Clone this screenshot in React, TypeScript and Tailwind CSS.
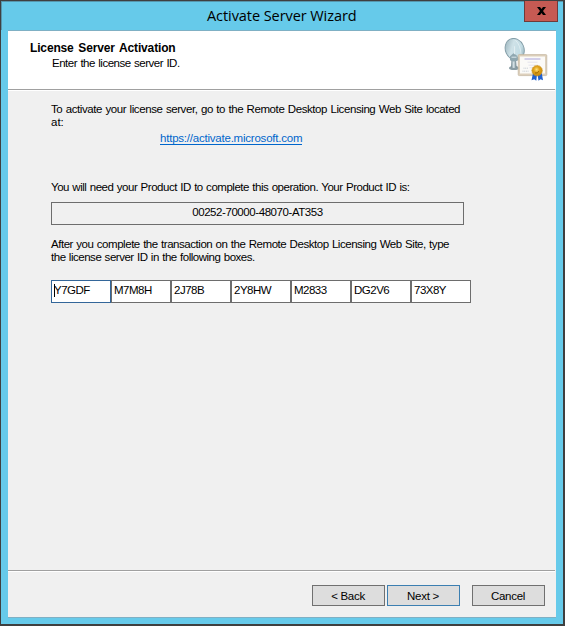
const keys = ["Y7GDF", "M7M8H", "2J78B", "2Y8HW", "M2833", "DG2V6", "73X8Y"];

function LicenseIcon() {
  return (
    <svg width="46" height="46" viewBox="0.5 0.8 46 46" className="block">
      <defs>
        <linearGradient id="dish" x1="0" y1="0" x2="1" y2="1">
          <stop offset="0" stopColor="#8fa9b2" />
          <stop offset="0.4" stopColor="#cfe2e8" />
          <stop offset="0.7" stopColor="#c3dce4" />
          <stop offset="1" stopColor="#86a1ab" />
        </linearGradient>
        <linearGradient id="stand" x1="0" y1="0" x2="1" y2="0">
          <stop offset="0" stopColor="#6d838c" />
          <stop offset="0.5" stopColor="#dce8ec" />
          <stop offset="1" stopColor="#5f767f" />
        </linearGradient>
        <radialGradient id="seal" cx="0.45" cy="0.4" r="0.6">
          <stop offset="0" stopColor="#ffe27a" />
          <stop offset="0.45" stopColor="#e0a21c" />
          <stop offset="1" stopColor="#c98a0c" />
        </radialGradient>
      </defs>
      <ellipse cx="10.5" cy="30.7" rx="5" ry="2" fill="#8a9da5" />
      <path d="M8 22 L12.5 22 L13 30 Q11 31.5 7.5 30Z" fill="url(#stand)" />
      <ellipse cx="11.2" cy="12" rx="9.3" ry="11" transform="rotate(-24 11.2 12)" fill="url(#dish)" stroke="#839da7" strokeWidth="0.9" />
      <path d="M6.5 19 L10 16 L13 18 L16 22 Q11 26 6.5 23Z" fill="#8fa7b0" />
      <path d="M8 20H13" stroke="#d9e6ea" strokeWidth="1" />
      <path d="M12 3 Q17 8 17.5 17" fill="none" stroke="#edf5f7" strokeWidth="1" opacity="0.6" />
      <path d="M11 9V17" stroke="#edf5f7" strokeWidth="1" opacity="0.7" />
      <rect x="14.7" y="17.4" width="28.6" height="21" rx="1" fill="#ddd0bc" stroke="#c3b49e" strokeWidth="0.7" />
      <rect x="16.5" y="19.3" width="25" height="17" fill="#fbfaf7" />
      <path d="M21 21.8H37" stroke="#aaa4dc" strokeWidth="1" />
      <path d="M24 25H34M25 28H33M26 30.5H32" stroke="#dadaea" strokeWidth="0.7" />
      <path d="M20 31H25M19 34H25" stroke="#c4cbd2" strokeWidth="1" strokeDasharray="1 0.7" />
      <path d="M29.5 36 L33.5 37 L32.8 43.5 L30.7 42 L28 43Z" fill="#2160ce" />
      <path d="M34 37 L38.3 36 L39.5 43 L37 42 L35 43.5Z" fill="#2160ce" />
      <circle cx="33.6" cy="33.4" r="5.2" fill="url(#seal)" stroke="#c98e16" strokeWidth="0.8" strokeDasharray="1.2 0.5" />
      <path d="M31.5 35.8 Q34 36.5 35.5 34" fill="none" stroke="#9d6500" strokeWidth="1" />
    </svg>
  );
}

function Rule() {
  return <div className="mr-px h-[2px] shrink-0 border-t border-[#a0a0a0] bg-white" />;
}

export default function App() {
  return (
    <div className="flex h-[626px] w-[565px] flex-col overflow-hidden border-t border-r-2 border-b-2 border-l border-[#3f3f3f] bg-[#66caea] font-['Liberation_Sans',Arial,sans-serif] text-[11.5px] leading-[13px] text-black">
      <div className="flex h-[29px] shrink-0 border-t border-l border-[#5696ad]">
        <div className="w-[41px]" />
        <div className="flex-1 pt-[4px] pl-[164px] font-['Open_Sans','Noto_Sans',sans-serif] text-[14.5px] leading-[20px] whitespace-nowrap">
          <span className="tracking-[-0.07px]">Activate Server Wizard</span>
        </div>
        <button className="mr-[5px] -mt-px flex h-[21px] w-[34px] items-center justify-center border border-t-0 border-[#6f3a3a] bg-[#c65a53]">
          <svg width="9" height="8" viewBox="0 0 9 8">
            <path d="M0 0H3L4.5 2L6 0H9L6 4L9 8H6L4.5 6L3 8H0L3 4Z" fill="#000" />
          </svg>
        </button>
      </div>
      <div className="mr-[7px] mb-[6px] ml-[7px] flex flex-1 flex-col border-t border-b border-[#7fb0c4] bg-[#f0f0f0]">
        <header className="flex h-[58px] shrink-0 justify-between bg-white pr-[6px]">
          <div className="pt-[11px] pl-[22px] whitespace-nowrap">
            <h1 className="text-[12px] leading-[13px] font-bold [word-spacing:1.5px]"><span className="tracking-[-0.15px]">License Server Activation</span></h1>
            <p className="mt-[2px] pl-[22px] [word-spacing:0.6px]"><span className="tracking-[-0.48px]">Enter the license server ID.</span></p>
          </div>
          <div className="pt-[7px]"><LicenseIcon /></div>
        </header>
        <Rule />
        <main className="flex flex-1 flex-col pt-[12px] pl-[43px] whitespace-nowrap [word-spacing:0.6px]">
          <p>
            <span className="tracking-[-0.41px]">To activate your license server, go to the Remote Desktop Licensing Web Site located</span><br />
            <span>at:</span>
          </p>
          <a className="mt-[3px] ml-[109px] self-start border-b border-[#0066cc] leading-[12px] text-[#0066cc]">
            <span className="tracking-[-0.22px]">https://activate.microsoft.com</span>
          </a>
          <p className="mt-[36px]"><span className="tracking-[-0.47px]">You will need your Product ID to complete this operation. Your Product ID is:</span></p>
          <div className="mt-[8px] h-[23px] w-[413px] border border-[#6d6d6d] pt-[3px] text-center">
            <span className="tracking-[-0.43px]">00252-70000-48070-AT353</span>
          </div>
          <p className="mt-[13px]">
            <span className="tracking-[-0.46px]">After you complete the transaction on the Remote Desktop Licensing Web Site, type</span><br />
            <span className="tracking-[-0.48px]">the license server ID in the following boxes.</span>
          </p>
          <div className="mt-[16px] flex">
            {keys.map((key, i) => (
              <div key={key} className={`flex h-[23px] w-[60px] border bg-white pt-[3px] pl-[2px] ${i === 0 ? "border-[#336699]" : "border-[#6d6d6d]"}`}>
                {i === 0 && <i className="-mr-px h-[13px] w-px bg-black" />}
                <span className="tracking-[-0.5px]">{key}</span>
              </div>
            ))}
          </div>
        </main>
        <Rule />
        <footer className="flex h-[45px] shrink-0 justify-end pt-[13px] pr-[11px] tracking-[-0.3px]">
          <button className="h-[21px] w-[73px] border border-[#707070] bg-[#dddddd] pt-[2px] pr-px">&lt; Back</button>
          <button className="ml-[2px] h-[21px] w-[73px] border border-[#3c7fb1] bg-[#dddddd] pt-[2px] pr-px">Next &gt;</button>
          <button className="ml-[12px] h-[21px] w-[73px] border border-[#707070] bg-[#dddddd] pt-[2px] pr-px">Cancel</button>
        </footer>
      </div>
    </div>
  );
}
